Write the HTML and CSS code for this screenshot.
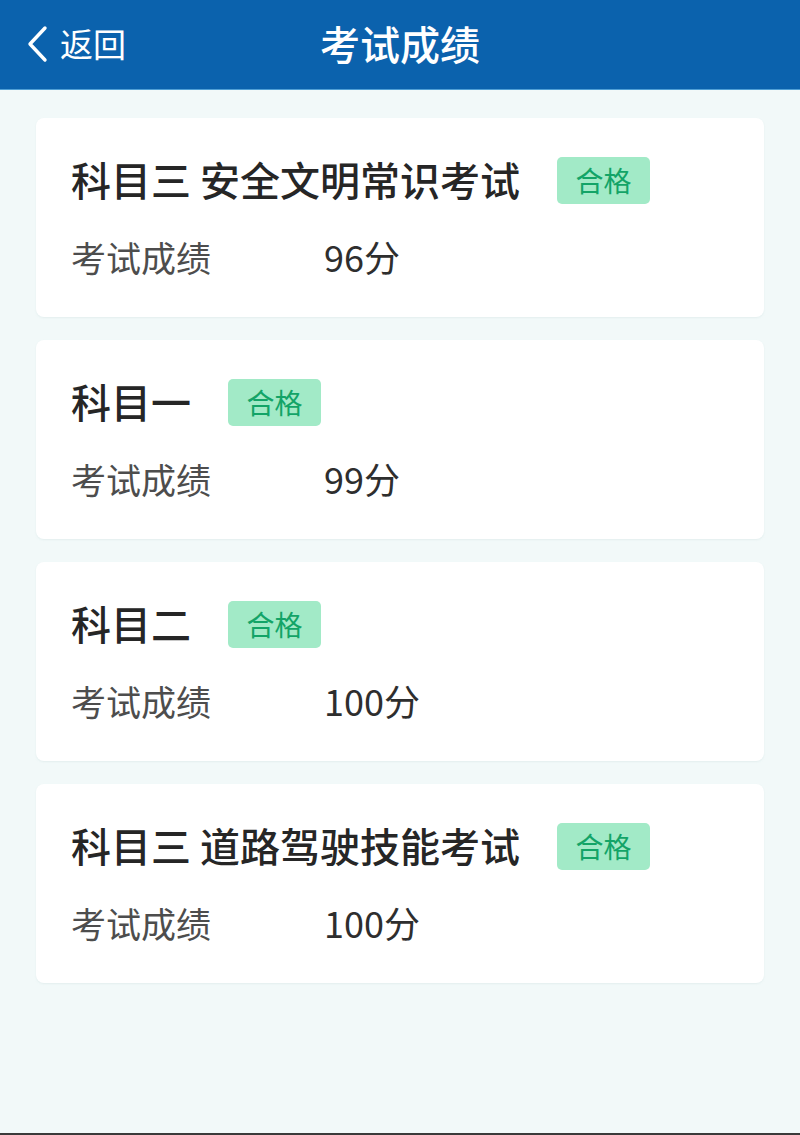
FILE: index.html
```html
<!DOCTYPE html>
<html lang="zh-CN">
<head>
<meta charset="utf-8">
<title>考试成绩</title>
<link rel="stylesheet" href="styles.css">
</head>
<body>
<div class="page">
  <header class="topbar">
    <div class="back">
      <svg class="chev" width="26" height="38" viewBox="0 0 26 38"><path d="M20 3 L5 19 L20 35" fill="none" stroke="#fff" stroke-width="3.4" stroke-linecap="round" stroke-linejoin="round"/></svg>
      <span class="back-text">返回</span>
    </div>
    <h1 class="title">考试成绩</h1>
  </header>
  <main class="list">
    <section class="card">
      <div class="card-head"><span class="subject">科目三 安全文明常识考试</span><span class="badge">合格</span></div>
      <div class="row"><span class="label">考试成绩</span><span class="value">96分</span></div>
    </section>
    <section class="card">
      <div class="card-head"><span class="subject">科目一</span><span class="badge">合格</span></div>
      <div class="row"><span class="label">考试成绩</span><span class="value">99分</span></div>
    </section>
    <section class="card">
      <div class="card-head"><span class="subject">科目二</span><span class="badge">合格</span></div>
      <div class="row"><span class="label">考试成绩</span><span class="value">100分</span></div>
    </section>
    <section class="card">
      <div class="card-head"><span class="subject">科目三 道路驾驶技能考试</span><span class="badge">合格</span></div>
      <div class="row"><span class="label">考试成绩</span><span class="value">100分</span></div>
    </section>
  </main>
  <div class="bottom-line"></div>
</div>
</body>
</html>
```
FILE: styles.css
```css
* { box-sizing: border-box; margin: 0; padding: 0; }
html, body { width: 800px; height: 1135px; overflow: hidden; }
body {
  background: #f2f9f9;
  font-family: "Noto Sans CJK SC", "Noto Sans", sans-serif;
}
.page {
  display: flex;
  flex-direction: column;
  height: 1135px;
}
.topbar {
  position: relative;
  height: 90px;
  background: #0b62ad;
  border-bottom: 1px solid #4f9fd6;
  display: flex;
  align-items: center;
  justify-content: center;
  flex-shrink: 0;
}
.back {
  position: absolute;
  left: 25px;
  top: 0;
  height: 88px;
  display: flex;
  align-items: center;
  color: #fff;
}
.chev { display: block; margin-right: 9px; margin-top: -1px; }
.back-text {
  font-size: 33px;
  line-height: 1;
  font-weight: 400;
  margin-top: -2px;
}
.title {
  color: #fff;
  font-size: 40px;
  font-weight: 500;
  line-height: 1;
  margin-top: -4px;
}
.list {
  flex: 1;
  padding: 28px 36px 0;
  display: flex;
  flex-direction: column;
  gap: 23px;
}
.card {
  background: #fff;
  border-radius: 8px;
  height: 199px;
  padding: 39px 35px 0;
  box-shadow: 0 1px 2px rgba(200, 220, 220, 0.35);
}
.card-head {
  display: flex;
  align-items: center;
  height: 47px;
}
.subject {
  font-size: 40px;
  font-weight: 500;
  color: #262626;
  line-height: 1;
  margin-top: -3px;
}
.badge {
  margin-left: 37px;
  width: 93px;
  height: 47px;
  border-radius: 5px;
  background: #a2eac7;
  color: #13a467;
  font-size: 28px;
  line-height: 47px;
  text-align: center;
}
.row {
  display: flex;
  align-items: center;
  margin-top: 32px;
  height: 40px;
}
.label {
  width: 253px;
  font-size: 35px;
  color: #4d4d4d;
  line-height: 1;
}
.value {
  font-size: 36px;
  color: #2e2e2e;
  line-height: 1;
}
.bottom-line {
  height: 2px;
  background: #3a3a3a;
  flex-shrink: 0;
}
```
